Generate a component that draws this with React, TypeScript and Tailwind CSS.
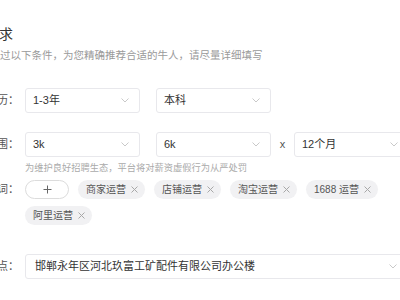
import React from 'react'

const font = "font-['Liberation_Sans','Noto_Sans_CJK_SC',sans-serif]"

const Chevron = () => (
  <svg width="8" height="5" viewBox="0 0 8 5" fill="none" className="shrink-0">
    <path d="M0.5 0.5L4 4L7.5 0.5" stroke="#c9c9c9" strokeWidth="1" />
  </svg>
)

const Close = () => (
  <svg width="7" height="7" viewBox="0 0 7 7" fill="none" className="shrink-0">
    <path d="M0.5 0.5L6.5 6.5M6.5 0.5L0.5 6.5" stroke="#a8a8a8" strokeWidth="1" />
  </svg>
)

function Select({ value, className = '' }: { value: string; className?: string }) {
  return (
    <div className={`flex h-[25px] shrink-0 items-center justify-between rounded-[3px] border border-[#e8e8ec] pl-[7px] pr-[10px] text-[11px] text-[#333] ${className}`}>
      <span>{value}</span>
      <Chevron />
    </div>
  )
}

function Label({ text }: { text: string }) {
  return <div className="w-[61px] shrink-0 text-right text-[11px] leading-[25px] text-[#555]">{text}</div>
}

function Tag({ text }: { text: string }) {
  return (
    <div className="flex h-[19px] shrink-0 items-center gap-[5px] whitespace-nowrap rounded-full bg-[#f1f1f3] pl-[8px] pr-[7px] text-[10px] text-[#555]">
      <span>{text}</span>
      <Close />
    </div>
  )
}

const tags = ['商家运营', '店铺运营', '淘宝运营', '1688 运营', '阿里运营']

export default function App() {
  return (
    <div className={`relative h-[300px] w-[400px] overflow-hidden bg-white ${font}`}>
      <div className="ml-[-43px] mt-[26px] whitespace-nowrap text-[14px] leading-[16px] text-[#333]">任职要求</div>
      <div className="ml-[-21px] mt-[7px] whitespace-nowrap text-[10.5px] leading-[12px] text-[#9a9a9a]">
        请通过以下条件，为您精确推荐合适的牛人，请尽量详细填写
      </div>

      <div className="ml-[-42px] mt-[27px] flex gap-[6px]">
        <Label text="学历：" />
        <div className="flex gap-[16px]">
          <Select value="1-3年" className="w-[115px]" />
          <Select value="本科" className="w-[115px]" />
        </div>
      </div>

      <div className="ml-[-42px] mt-[19px] flex gap-[6px]">
        <Label text="薪资范围：" />
        <div className="flex flex-col">
          <div className="flex items-center">
            <Select value="3k" className="w-[115px]" />
            <Select value="6k" className="ml-[16px] w-[115px]" />
            <span className="w-[23px] text-center text-[11px] text-[#555]">x</span>
            <Select value="12个月" className="w-[115px]" />
          </div>
          <div className="mt-[5px] whitespace-nowrap text-[9.25px] leading-[12px] text-[#aaa]">
            为维护良好招聘生态，平台将对薪资虚假行为从严处罚
          </div>
        </div>
      </div>

      <div className="ml-[-42px] mt-[6px] flex gap-[6px]">
        <div className="w-[61px] shrink-0 text-right text-[11px] leading-[19px] text-[#555]">关键词：</div>
        <div className="flex w-[375px] flex-wrap gap-x-[9px] gap-y-[7px]">
          <div className="flex h-[19px] w-[44px] items-center justify-center rounded-full border border-[#dcdcdc]">
            <svg width="9" height="9" viewBox="0 0 9 9" fill="none">
              <path d="M4.5 0.5V8.5M0.5 4.5H8.5" stroke="#666" strokeWidth="1" />
            </svg>
          </div>
          {tags.map(t => (
            <Tag key={t} text={t} />
          ))}
        </div>
      </div>

      <div className="ml-[-42px] mt-[29px] flex gap-[6px]">
        <Label text="工作地点：" />
        <Select value="邯郸永年区河北玖富工矿配件有限公司办公楼" className="w-[383px] pl-[9px]" />
      </div>
    </div>
  )
}
